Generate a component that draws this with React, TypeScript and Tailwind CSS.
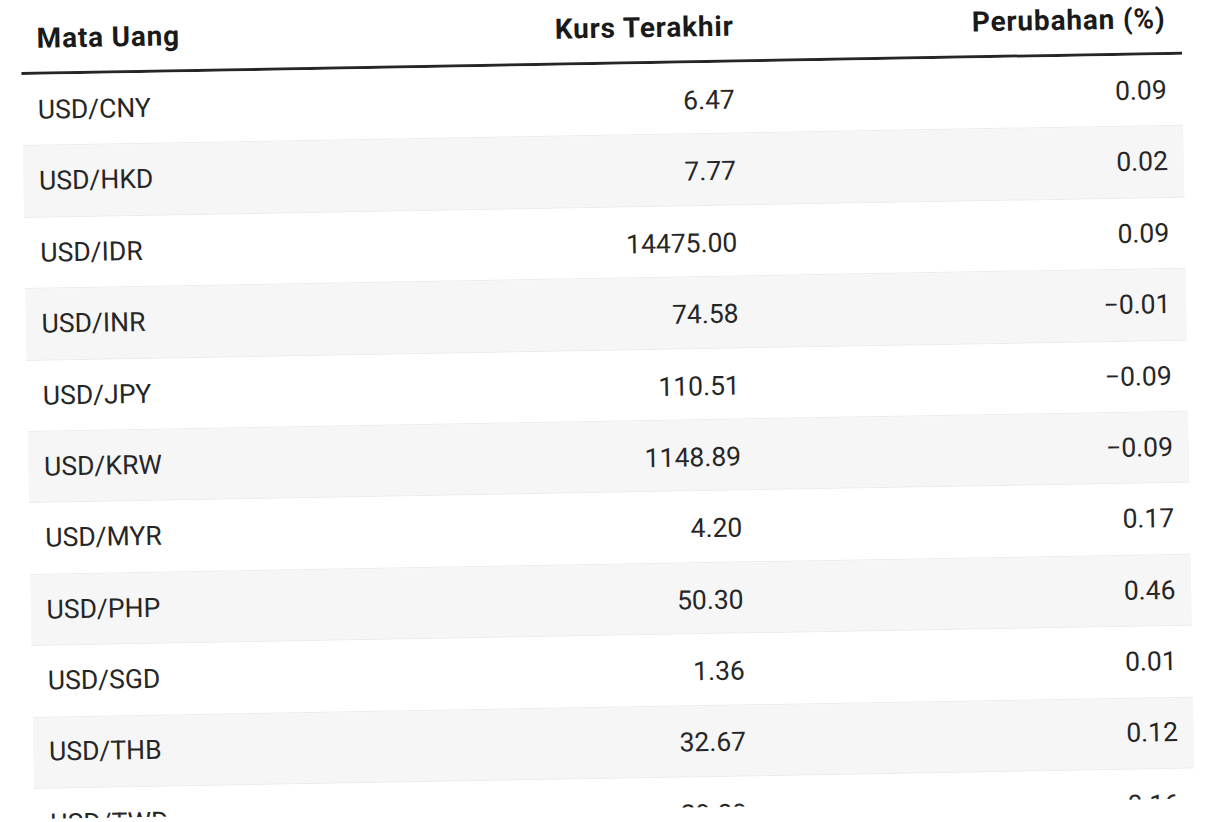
const rows = [
  { pair: "USD/CNY", rate: "6.47", change: "0.09" },
  { pair: "USD/HKD", rate: "7.77", change: "0.02" },
  { pair: "USD/IDR", rate: "14475.00", change: "0.09" },
  { pair: "USD/INR", rate: "74.58", change: "\u22120.01" },
  { pair: "USD/JPY", rate: "110.51", change: "\u22120.09" },
  { pair: "USD/KRW", rate: "1148.89", change: "\u22120.09" },
  { pair: "USD/MYR", rate: "4.20", change: "0.17" },
  { pair: "USD/PHP", rate: "50.30", change: "0.46" },
  { pair: "USD/SGD", rate: "1.36", change: "0.01" },
  { pair: "USD/THB", rate: "32.67", change: "0.12" },
  { pair: "USD/TWD", rate: "29.89", change: "0.16" },
]

export default function App() {
  return (
    <div className="h-[822px] w-full overflow-hidden bg-white">
      <div className="ml-[20px] mt-[1px] h-[818px] w-[1161px] origin-top-left -rotate-1 overflow-hidden font-['Roboto','Liberation_Sans',sans-serif] text-[26.5px] leading-none">
        {/* header */}
        <div className="flex h-[74px] items-center border-b-[3px] border-[#262626] px-4 pt-[4px] text-[28px] font-bold tracking-[0.8px] text-[#1a1a1a]">
          <div className="flex-1">Mata Uang</div>
          <div className="w-[332px] text-right">Kurs Terakhir</div>
          <div className="w-[432px] text-right">Perubahan (%)</div>
        </div>

        {rows.map((r, i) => (
          <div
            key={r.pair}
            className={`flex h-[71.4px] items-center border-b border-[#ebebeb] px-4 text-[#262626] ${
              i % 2 === 1 ? "bg-[#f6f6f6]" : "bg-white"
            }`}
          >
            <div className="flex-1">{r.pair}</div>
            <div className="w-[332px] pt-[4px] text-right">{r.rate}</div>
            <div className="w-[432px] text-right">{r.change}</div>
          </div>
        ))}
      </div>
    </div>
  )
}
